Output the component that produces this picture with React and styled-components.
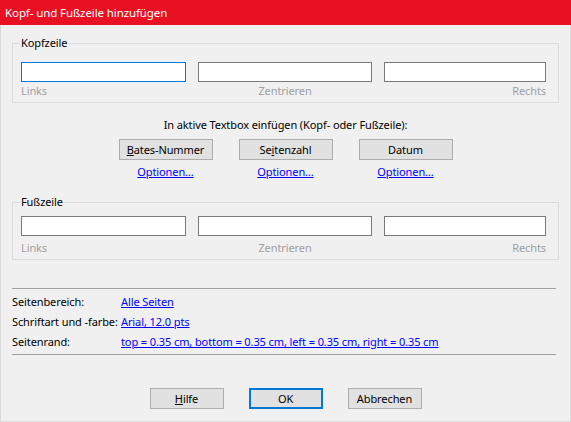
import React from 'react'
import styled, { createGlobalStyle } from 'styled-components'

const Global = createGlobalStyle`
  html, body { margin: 0; padding: 0; background: #f0f0f0; }
  * { box-sizing: border-box; }
`

const Window = styled.div`
  width: 571px;
  height: 422px;
  display: flex;
  flex-direction: column;
  font-family: "Segoe UI", "Noto Sans", "Liberation Sans", sans-serif;
  font-size: 11px;
  letter-spacing: -0.1px;
  color: #000;
`

const TitleBar = styled.div`
  height: 25px;
  flex: none;
  background: #e81123;
  color: #fff;
  display: flex;
  align-items: center;
  padding-left: 5px;
  font-size: 11.5px;
`

const Body = styled.div`
  flex: 1;
  background: #f0f0f0;
  border: 1px solid #dadada;
  border-top: none;
  display: flex;
  flex-direction: column;
`

const Group = styled.div`
  position: relative;
  margin: ${p => p.$top}px 11px 0 11px;
  border: 1px solid #dcdcdc;
  padding: ${p => p.$pad}px 12px 3px 8px;
`

const Legend = styled.div`
  position: absolute;
  top: -9px;
  left: 7px;
  padding: 0 1px;
  background: #f0f0f0;
  line-height: 16px;
`

const Fields = styled.div`
  display: grid;
  grid-template-columns: 165px 174px 162px;
  column-gap: 12px;
  row-gap: ${p => p.$gap}px;
`

const Input = styled.div`
  height: 20px;
  background: #fff;
  border: 1px solid ${p => (p.$focus ? '#0078d7' : '#7a7a7a')};
`

const Hint = styled.div`
  color: #a0a0a0;
  line-height: 16px;
  text-align: ${p => p.$align};
`

const Caption = styled.div`
  margin-top: 14px;
  text-align: center;
  line-height: 16px;
`

const InsertRow = styled.div`
  display: flex;
  justify-content: center;
  gap: 26px;
  margin-top: 6px;
`

const InsertCol = styled.div`
  display: flex;
  flex-direction: column;
  align-items: center;
  gap: 4px;
`

const Button = styled.div`
  width: ${p => p.$w}px;
  height: 21px;
  background: #e1e1e1;
  border: ${p => (p.$default ? '2px solid #0078d7' : '1px solid #adadad')};
  display: flex;
  align-items: center;
  justify-content: center;
  u { text-decoration: underline; }
`

const Link = styled.a`
  color: #0000ff;
  text-decoration: underline;
  line-height: 16px;
  white-space: nowrap;
  cursor: pointer;
`

const Separator = styled.div`
  height: 1px;
  background: #a0a0a0;
  margin: ${p => p.$top}px 14px 0 11px;
`

const InfoList = styled.div`
  margin: 5px 0 0 11px;
  display: flex;
  flex-direction: column;
  gap: 4px;
`

const InfoRow = styled.div`
  display: flex;
  line-height: 16px;
`

const InfoLabel = styled.div`
  width: 109px;
  flex: none;
  white-space: nowrap;
`

const Footer = styled.div`
  display: flex;
  justify-content: center;
  gap: 25px;
  margin-top: 33px;
`

export default function App() {
  return (
    <>
      <Global />
      <Window>
        <TitleBar>Kopf- und Fußzeile hinzufügen</TitleBar>
        <Body>
          <Group $top={18} $pad={18}>
            <Legend>Kopfzeile</Legend>
            <Fields $gap={1}>
              <Input $focus />
              <Input />
              <Input />
              <Hint $align="left">Links</Hint>
              <Hint $align="center">Zentrieren</Hint>
              <Hint $align="right">Rechts</Hint>
            </Fields>
          </Group>

          <Caption>In aktive Textbox einfügen (Kopf- oder Fußzeile):</Caption>
          <InsertRow>
            <InsertCol>
              <Button $w={94}><span><u>B</u>ates-Nummer</span></Button>
              <Link>Optionen…</Link>
            </InsertCol>
            <InsertCol>
              <Button $w={94}><span>Se<u>i</u>tenzahl</span></Button>
              <Link>Optionen…</Link>
            </InsertCol>
            <InsertCol>
              <Button $w={94}>Datum</Button>
              <Link>Optionen…</Link>
            </InsertCol>
          </InsertRow>

          <Group $top={22} $pad={13}>
            <Legend>Fußzeile</Legend>
            <Fields $gap={4}>
              <Input />
              <Input />
              <Input />
              <Hint $align="left">Links</Hint>
              <Hint $align="center">Zentrieren</Hint>
              <Hint $align="right">Rechts</Hint>
            </Fields>
          </Group>

          <Separator $top={28} />
          <InfoList>
            <InfoRow>
              <InfoLabel>Seitenbereich:</InfoLabel>
              <Link>Alle Seiten</Link>
            </InfoRow>
            <InfoRow>
              <InfoLabel>Schriftart und -farbe:</InfoLabel>
              <Link>Arial, 12.0 pts</Link>
            </InfoRow>
            <InfoRow>
              <InfoLabel>Seitenrand:</InfoLabel>
              <Link>top = 0.35 cm, bottom = 0.35 cm, left = 0.35 cm, right = 0.35 cm</Link>
            </InfoRow>
          </InfoList>
          <Separator $top={4} />

          <Footer>
            <Button $w={74}><span><u>H</u>ilfe</span></Button>
            <Button $w={74} $default>OK</Button>
            <Button $w={74}>Abbrechen</Button>
          </Footer>
        </Body>
      </Window>
    </>
  )
}
